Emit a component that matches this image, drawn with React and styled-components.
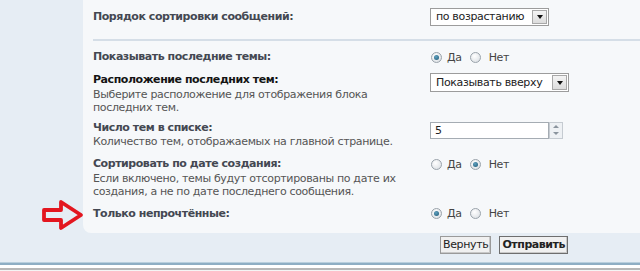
import React from "react";
import styled, { createGlobalStyle } from "styled-components";

const GlobalStyle = createGlobalStyle`
    html, body {
        margin: 0;
        padding: 0;
        background: #e6edf4;
    }
    body {
        font-family: "DejaVu Sans", Verdana, sans-serif;
        font-size: 11px;
        letter-spacing: -0.35px;
    }
`;

const Page = styled.div`
    position: relative;
    width: 640px;
    height: 271px;
    overflow: hidden;
    background: #e6edf4;
`;

const Panel = styled.div`
    margin-left: 83px;
    background: #f6f8fa;
    border-bottom-left-radius: 8px;
    padding: 0 0 8px 10px;
`;

const Row = styled.div`
    display: grid;
    grid-template-columns: 337px 1fr;
    align-items: ${(p) => (p.center ? "center" : "start")};
    padding: ${(p) => p.pad || "4px 0"};
`;

const Separator = styled.div`
    height: 2px;
    background: #d5dee7;
    margin: 0 0 5px 0;
`;

const Label = styled.div`
    font-weight: bold;
    line-height: 14px;
    letter-spacing: -0.45px;
    color: ${(p) => (p.dark ? "#141414" : "#444852")};
`;

const Desc = styled.div`
    max-width: 322px;
    line-height: 13px;
    color: #555;
    margin-top: 0.5px;
`;

const SelectBox = styled.div`
    display: flex;
    align-items: center;
    justify-content: space-between;
    box-sizing: border-box;
    width: ${(p) => p.w}px;
    height: ${(p) => p.h}px;
    border: 1px solid #9c9c9c;
    background: #fff;
    padding: 0 1px 0 5px;
    color: #222;
    line-height: 14px;
`;

const DropButton = styled.div`
    display: flex;
    align-items: center;
    justify-content: center;
    box-sizing: border-box;
    width: 15px;
    height: calc(100% - 2px);
    border: 1px solid #a8a8a8;
    background: linear-gradient(#f4f4f4, #dcdcdc);
    &::after {
        content: "";
        border-left: 3px solid transparent;
        border-right: 3px solid transparent;
        border-top: 4px solid #111;
    }
`;

const Radios = styled.div`
    display: flex;
    align-items: center;
    height: 14px;
    color: #444;
    padding-left: 1px;
`;

const Radio = styled.span`
    display: inline-block;
    box-sizing: border-box;
    width: 11px;
    height: 11px;
    border-radius: 50%;
    border: 1px solid #9aa3ab;
    background: radial-gradient(circle at 40% 35%, #ffffff, #d6dbe0);
    margin-right: ${(p) => p.gap}px;
    position: relative;
    &::after {
        content: "";
        display: ${(p) => (p.checked ? "block" : "none")};
        position: absolute;
        left: 2px;
        top: 2px;
        width: 5px;
        height: 5px;
        border-radius: 50%;
        background: radial-gradient(circle at 40% 35%, #5fa0bf, #1d5874);
    }
`;

const RadioText = styled.span`
    margin-right: 8px;
`;

const NumberField = styled.div`
    display: flex;
    align-items: stretch;
    height: 17px;
    margin-top: 1px;
`;

const NumberInput = styled.div`
    box-sizing: border-box;
    width: 119px;
    border: 1px solid #a5acb3;
    background: #fff;
    padding: 1px 4px;
    color: #222;
    line-height: 14px;
`;

const Spinner = styled.div`
    display: flex;
    flex-direction: column;
    box-sizing: border-box;
    width: 14px;
    border: 1px solid #c5cbd1;
    background: #eef1f4;
`;

const SpinPart = styled.div`
    flex: 1;
    display: flex;
    align-items: center;
    justify-content: center;
    &::after {
        content: "";
        border-left: 3px solid transparent;
        border-right: 3px solid transparent;
        ${(p) => (p.up ? "border-bottom: 3px solid #8a949d;" : "border-top: 3px solid #8a949d;")}
    }
`;

const Footer = styled.div`
    display: flex;
    justify-content: flex-start;
    gap: 8px;
    padding: 3px 0 0 440px;
`;

const Button = styled.button`
    box-sizing: border-box;
    height: 18px;
    padding: 0 2px;
    font-family: inherit;
    font-size: 11px;
    letter-spacing: ${(p) => (p.primary ? "-0.45px" : "-0.35px")};
    font-weight: ${(p) => (p.primary ? "bold" : "normal")};
    color: #222;
    background: #f0f0f0;
    border: 1px solid ${(p) => (p.primary ? "#6e6e6e" : "#9a9a9a")};
    box-shadow: inset -1px -1px 0 #c8c8c8;
    line-height: 14px;
`;

const BottomRule = styled.div`
    position: absolute;
    left: 0;
    right: 0;
    top: 262px;
    height: 9px;
    border-top: 1px solid #b9cfdd;
    background: linear-gradient(
        #8eaec4 0, #8eaec4 2px,
        #ffffff 2px, #ffffff 5px,
        #b7b7b7 5px, #b7b7b7 7px,
        #f4f4f4 7px
    );
`;

const Pointer = styled.svg`
    position: absolute;
    left: 40px;
    top: 199px;
`;

const Select = ({ w, h, children }) => (
    <SelectBox w={w} h={h}>
        <span>{children}</span>
        <DropButton />
    </SelectBox>
);

const YesNo = ({ yes }) => (
    <Radios>
        <Radio checked={yes} gap={5} />
        <RadioText>Да</RadioText>
        <Radio checked={!yes} gap={8} />
        <span>Нет</span>
    </Radios>
);

export default function App() {
    return (
        <Page>
            <GlobalStyle />
            <Panel>
                <Row center pad="8px 0 13px 0">
                    <Label>Порядок сортировки сообщений:</Label>
                    <Select w={119} h={18}>по возрастанию</Select>
                </Row>
                <Separator />
                <Row pad="4px 0 5px 0">
                    <Label>Показывать последние темы:</Label>
                    <YesNo yes />
                </Row>
                <Row pad="4px 0 3px 0">
                    <div>
                        <Label dark>Расположение последних тем:</Label>
                        <Desc>Выберите расположение для отображения блока последних тем.</Desc>
                    </div>
                    <Select w={139} h={19}>Показывать вверху</Select>
                </Row>
                <Row pad="4px 0 5px 0">
                    <div>
                        <Label>Число тем в списке:</Label>
                        <Desc>Количество тем, отображаемых на главной странице.</Desc>
                    </div>
                    <NumberField>
                        <NumberInput>5</NumberInput>
                        <Spinner>
                            <SpinPart up />
                            <SpinPart />
                        </Spinner>
                    </NumberField>
                </Row>
                <Row pad="4px 0 5px 0">
                    <div>
                        <Label>Сортировать по дате создания:</Label>
                        <Desc>Если включено, темы будут отсортированы по дате их создания, а не по дате последнего сообщения.</Desc>
                    </div>
                    <YesNo />
                </Row>
                <Row>
                    <Label>Только непрочтённые:</Label>
                    <YesNo yes />
                </Row>
            </Panel>
            <Footer>
                <Button>Вернуть</Button>
                <Button primary>Отправить</Button>
            </Footer>
            <BottomRule />
            <Pointer width="46" height="32" viewBox="0 0 46 32">
                <polygon
                    points="4,11 21,11 21,3 41,16 21,29 21,21 4,21"
                    fill="none"
                    stroke="#e3161f"
                    strokeWidth="3.8"
                    strokeLinejoin="round"
                />
            </Pointer>
        </Page>
    );
}
